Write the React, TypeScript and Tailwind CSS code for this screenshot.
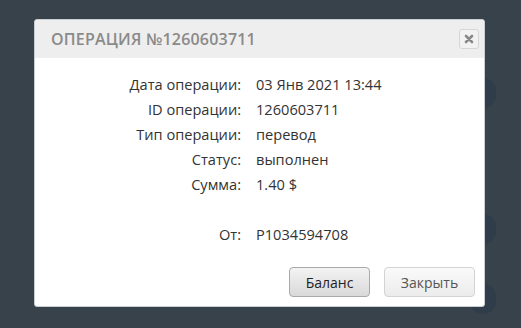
import React from "react";

const rows: [string, string][] = [
  ["Дата операции:", "03 Янв 2021 13:44"],
  ["ID операции:", "1260603711"],
  ["Тип операции:", "перевод"],
  ["Статус:", "выполнен"],
  ["Сумма:", "1.40 $"],
];

export default function App() {
  return (
    <div className="relative w-[521px] h-[328px] overflow-hidden bg-[#37424b]" style={{ fontFamily: "'Open Sans', sans-serif" }}>
      <div className="absolute left-[470px] top-[78px] w-[26px] h-[30px] rounded-full bg-[#2f3d4a]" />
      <div className="absolute left-[470px] top-[214px] w-[26px] h-[30px] rounded-full bg-[#2f3d4a]" />
      <div className="absolute left-[470px] top-[284px] w-[26px] h-[30px] rounded-full bg-[#2f3d4a]" />
      <div className="absolute left-[34px] top-[19px] w-[451px] h-[288px] bg-white rounded-[3px] border border-[#c9ced3] flex flex-col">
        <div className="h-[38px] bg-[#eeeeee] flex items-center justify-between pl-[16px] pr-[5px] rounded-t-[3px]">
          <span className="text-[16px] text-[#8a8a8a] tracking-[0.2px] font-semibold">
            ОПЕРАЦИЯ №1260603711
          </span>
          <div className="w-[20px] h-[20px] border border-[#d6d6d6] rounded-[3px] bg-[#f2f2f2] flex items-center justify-center">
            <svg width="10" height="10" viewBox="0 0 10 10">
              <path d="M2 2 L8 8 M8 2 L2 8" stroke="#888" strokeWidth="2.6" strokeLinecap="round" />
            </svg>
          </div>
        </div>
        <div className="flex flex-col pt-[14px] text-[14.6px] text-[#333]">
          {rows.map(([l, v]) => (
            <div key={l} className="flex h-[25px] items-center">
              <div className="w-[206px] text-right">{l}</div>
              <div className="pl-[15px]">{v}</div>
            </div>
          ))}
          <div className="h-[25px]" />
          <div className="flex h-[25px] items-center">
            <div className="w-[206px] text-right">От:</div>
            <div className="pl-[15px]">P1034594708</div>
          </div>
        </div>
        <div className="flex-1" />
        <div className="flex justify-end gap-[14px] pr-[9px] pb-[9px] text-[14px]">
          <button className="w-[81px] h-[30px] rounded-[4px] border border-[#a9a9a9] bg-gradient-to-b from-[#f3f3f3] to-[#d9d9d9] text-[#222]">Баланс</button>
          <button className="w-[91px] h-[30px] rounded-[4px] border border-[#d3d3d3] bg-gradient-to-b from-[#fafafa] to-[#ececec] text-[#555]">Закрыть</button>
        </div>
      </div>
    </div>
  );
}
